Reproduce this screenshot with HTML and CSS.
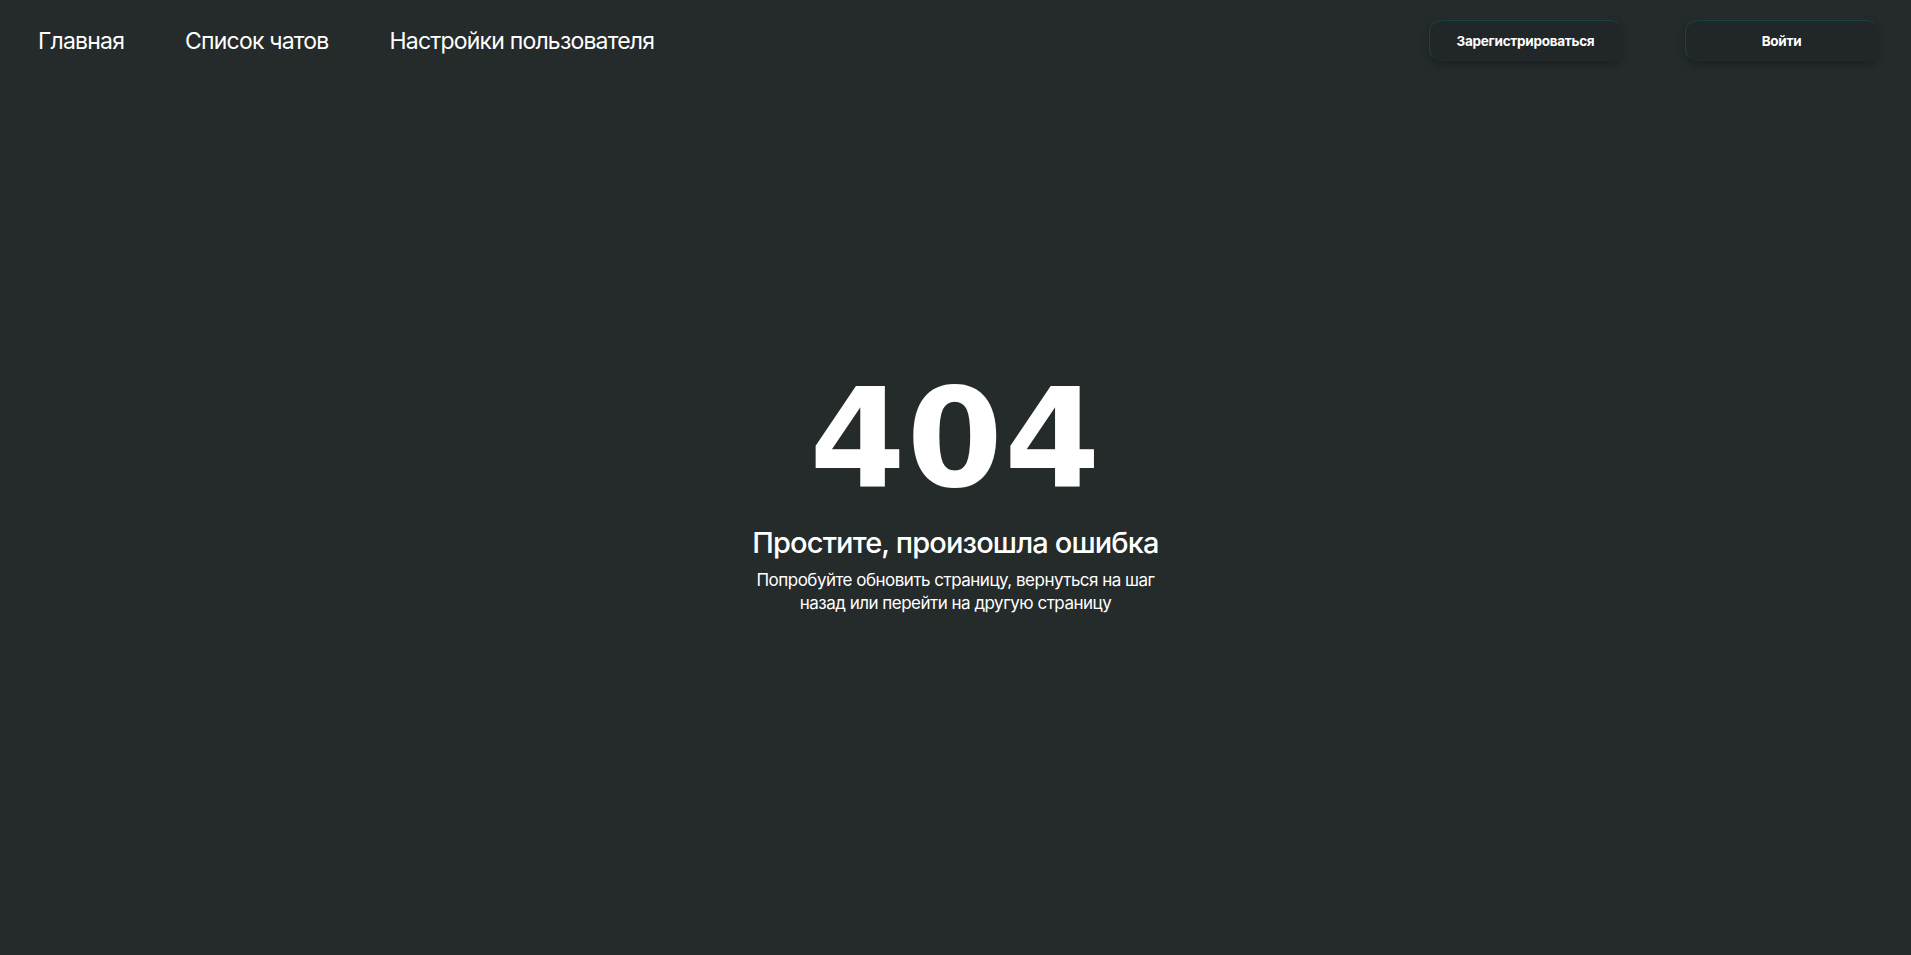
FILE: index.html
```html
<!DOCTYPE html>
<html lang="ru">
<head>
<meta charset="utf-8">
<title>404</title>
<link rel="stylesheet" href="styles.css">
</head>
<body>
<header class="header">
  <nav class="nav">
    <a class="nav-link" href="#">Главная</a>
    <a class="nav-link" href="#">Список чатов</a>
    <a class="nav-link" href="#">Настройки пользователя</a>
  </nav>
  <div class="actions">
    <button class="btn">Зарегистрироваться</button>
    <button class="btn">Войти</button>
  </div>
</header>
<main class="error">
  <div class="code">404</div>
  <h1 class="title">Простите, произошла ошибка</h1>
  <p class="text">Попробуйте обновить страницу, вернуться на шаг<br>назад или перейти на другую страницу</p>
</main>
</body>
</html>
```
FILE: styles.css
```css
* { box-sizing: border-box; }
html, body { margin: 0; height: 100%; }
body {
  background: #252a2b;
  color: #ffffff;
  font-family: Inter, "Noto Sans", sans-serif;
}
.header {
  height: 81px;
  display: flex;
  align-items: center;
  justify-content: space-between;
  padding: 0 33px 0 38px;
}
.nav {
  display: flex;
  gap: 61px;
}
.nav-link {
  color: #ffffff;
  text-decoration: none;
  font-size: 23px;
  letter-spacing: -0.035em;
  font-weight: 400;
}
.actions {
  display: flex;
  gap: 63px;
}
.btn {
  width: 193px;
  height: 41px;
  border-radius: 12px;
  background: #212628;
  border: 1px solid #1e4049;
  border-bottom-color: #232a2c;
  border-right-color: #232a2c;
  box-shadow: 0 4px 8px rgba(0,0,0,0.25);
  color: #ffffff;
  font-family: Inter, sans-serif;
  font-weight: 700;
  font-size: 13.5px;
  letter-spacing: -0.02em;
}
.error {
  display: flex;
  flex-direction: column;
  align-items: center;
  padding-top: 289px;
}
.code {
  font-family: "DejaVu Sans", sans-serif;
  font-weight: 700;
  font-size: 138px;
  line-height: 1;
  letter-spacing: 0.01em;
}
.title {
  margin: 17px 0 0;
  font-size: 29px;
  font-weight: 500;
  letter-spacing: -0.03em;
}
.text {
  margin: 9px 0 0;
  font-size: 17px;
  line-height: 23px;
  text-align: center;
  letter-spacing: -0.03em;
}
```
